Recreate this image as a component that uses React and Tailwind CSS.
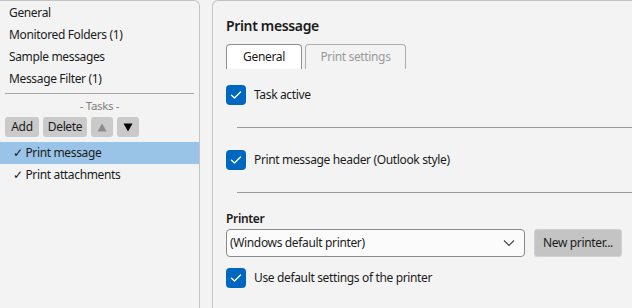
import React from "react";

const font = { fontFamily: '"Noto Sans", "Open Sans", sans-serif' };

const Check = ({ label }) => (
  <div className="flex items-center h-5">
    <span className="w-5 h-5 rounded-[4px] bg-[#0067c0] flex items-center justify-center">
      <svg width="12" height="10" viewBox="0 0 12 10" fill="none">
        <path d="M1.5 5.2 L4.5 8 L10.5 2" stroke="white" strokeWidth="1.4" strokeLinecap="round" strokeLinejoin="round" />
      </svg>
    </span>
    <span className="ml-2 text-[12px] tracking-[-0.35px] text-[#1b1b1b]">{label}</span>
  </div>
);

const Tri = ({ up, color }) => (
  <svg width="10" height="9" viewBox="0 0 10 9">
    <path d={up ? "M5 0.5 L9.5 8.5 L0.5 8.5 Z" : "M0.5 0.5 L9.5 0.5 L5 8.5 Z"} fill={color} />
  </svg>
);

const App = () => {
  const menu = ["General", "Monitored Folders (1)", "Sample messages", "Message Filter (1)"];

  return (
    <div className="w-[632px] h-[308px] bg-[#f3f3f3] flex overflow-hidden tracking-[-0.35px]" style={font}>
      {/* left navigation */}
      <div className="w-[200px] shrink-0 border-r border-t border-[#c4c4c4] rounded-tr-[6px] pt-[1px]">
        {menu.map((m) => (
          <div key={m} className="h-[22px] flex items-center pl-[9px] text-[12px] text-[#1b1b1b]">
            {m}
          </div>
        ))}
        <div className="mx-[5px] mt-[3px] border-t border-[#a8a8a8]" />
        <div className="mt-[1px] h-[22px] flex items-center justify-center text-[11.5px] text-[#808080]">- Tasks -</div>
        <div className="flex gap-1 px-[5px]">
          <button className="h-5 w-[34px] bg-[#cacaca] rounded-[3px] text-[12px] text-[#1b1b1b]">Add</button>
          <button className="h-5 w-[44px] bg-[#cacaca] rounded-[3px] text-[12px] text-[#1b1b1b]">Delete</button>
          <button className="h-5 w-[22px] bg-[#cacaca] rounded-[3px] flex items-center justify-center">
            <Tri up color="#8c8c8c" />
          </button>
          <button className="h-5 w-[22px] bg-[#cacaca] rounded-[3px] flex items-center justify-center">
            <Tri color="#000" />
          </button>
        </div>
        <div className="mt-[5px] h-[22px] flex items-center pl-[13px] bg-[#99c4e8] text-[12px] text-[#1b1b1b]">
          ✓ Print message
        </div>
        <div className="h-[22px] flex items-center pl-[13px] text-[12px] text-[#1b1b1b]">✓ Print attachments</div>
      </div>

      {/* right detail panel */}
      <div className="ml-[12px] w-[440px] shrink-0 border-l border-t border-[#c4c4c4] rounded-tl-[6px] pl-[13px]">
        <div className="mt-[14px] h-5 flex items-center text-[14px] font-semibold text-[#1b1b1b]">Print message</div>
        <div className="mt-[9px] flex gap-[3px]">
          <div className="w-[76px] h-[25px] bg-white border border-b-0 border-[#8f8f8f] rounded-t-[4px] flex items-center justify-center text-[12px] text-[#1b1b1b]">
            General
          </div>
          <div className="w-[101px] h-[25px] border border-b-0 border-[#adadad] rounded-t-[4px] flex items-center justify-center text-[12px] text-[#9a9a9a]">
            Print settings
          </div>
        </div>
        <div className="mt-[16px]">
          <Check label="Task active" />
        </div>
        <div className="ml-[11px] mt-[22px] border-t border-[#9a9a9a]" />
        <div className="mt-[22px]">
          <Check label="Print message header (Outlook style)" />
        </div>
        <div className="ml-[11px] mt-[22px] border-t border-[#9a9a9a]" />
        <div className="mt-[17px] h-[17px] flex items-center text-[12px] font-semibold text-[#1b1b1b]">Printer</div>
        <div className="mt-[2px] flex items-center gap-[9px]">
          <div className="w-[299px] h-[28px] bg-[#fbfbfb] border border-[#8a8a8a] rounded-[4px] flex items-center justify-between pl-[3px] pr-[9px] text-[12px] text-[#1b1b1b]">
            <span>(Windows default printer)</span>
            <svg width="12" height="8" viewBox="0 0 12 8" fill="none">
              <path d="M1 1.5 L6 6.5 L11 1.5" stroke="#444" strokeWidth="1.1" />
            </svg>
          </div>
          <button className="w-[88px] h-[28px] bg-[#c4c4c4] border border-[#d2d2d2] rounded-[3px] text-[12px] text-[#1b1b1b]">
            New printer...
          </button>
        </div>
        <div className="mt-[11px]">
          <Check label="Use default settings of the printer" />
        </div>
      </div>
    </div>
  );
};

export default App;
